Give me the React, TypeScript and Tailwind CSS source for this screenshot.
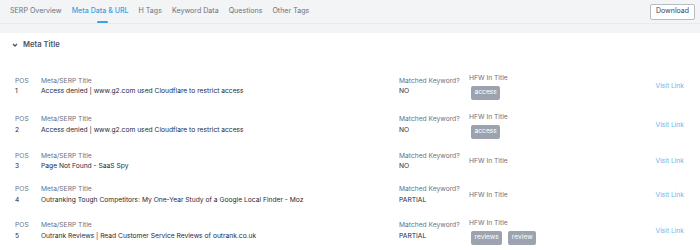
import React from 'react';

const tabs = ['SERP Overview', 'Meta Data & URL', 'H Tags', 'Keyword Data', 'Questions', 'Other Tags'];

const rows = [
  { pos: 1, title: 'Access denied | www.g2.com used Cloudflare to restrict access', matched: 'NO', hfw: ['access'] },
  { pos: 2, title: 'Access denied | www.g2.com used Cloudflare to restrict access', matched: 'NO', hfw: ['access'] },
  { pos: 3, title: 'Page Not Found - SaaS Spy', matched: 'NO', hfw: [] },
  { pos: 4, title: 'Outranking Tough Competitors: My One-Year Study of a Google Local Finder - Moz', matched: 'PARTIAL', hfw: [] },
  { pos: 5, title: 'Outrank Reviews | Read Customer Service Reviews of outrank.co.uk', matched: 'PARTIAL', hfw: ['reviews', 'review'] },
];

export default function App() {
  return (
    <div className="w-[700px] h-[250px] overflow-hidden bg-white font-['Inter',sans-serif]">
      <div className="flex items-center h-[24px] bg-[#f3f4f6] border-b border-[#e8eaed] pl-[10px] pr-[5px]">
        <div className="flex gap-[10px] h-full">
          {tabs.map((t, i) => (
            <div key={t} className="relative flex items-center h-full">
              <span className={`text-[7.1px] ${i === 1 ? 'text-[#3da1e3] font-medium' : 'text-[#6b7280]'}`}>{t}</span>
              {i === 1 && <span className="absolute left-[25px] bottom-0 w-[11px] h-[2px] bg-[#3da1e3] rounded-full" />}
            </div>
          ))}
        </div>
        <button className="ml-auto h-[16px] w-[45px] bg-white border border-[#b8bcc2] rounded-[2px] text-[7px] text-[#374151]">
          Download
        </button>
      </div>
      <div className="h-[9px] bg-[#f3f4f6]" />
      <div className="pl-[12px] pr-[16px]">
        <div className="flex items-center gap-[5px] h-[24px]">
          <svg width="6" height="4" viewBox="0 0 6 4" className="text-[#4b5563]">
            <path d="M1 1 L3 3 L5 1" fill="none" stroke="currentColor" strokeWidth="1.3" />
          </svg>
          <span className="text-[7.6px] font-semibold text-[#4b5563]">Meta Title</span>
        </div>
        <div className="mt-[10px] pl-[3px]">
          {rows.map((r) => (
            <div key={r.pos} className="flex items-center py-[6px] text-[6.7px] leading-[10.8px]">
              <div className="w-[26px] flex flex-col">
                <span className="text-[#6b7280]">POS</span>
                <span className="text-[#1f2937]">{r.pos}</span>
              </div>
              <div className="w-[358px] flex flex-col">
                <span className="text-[#6b7280]">Meta/SERP Title</span>
                <span className="text-[#1f2937]">{r.title}</span>
              </div>
              <div className="w-[70px] flex flex-col">
                <span className="text-[#6b7280]">Matched Keyword?</span>
                <span className="text-[#1f2937]">{r.matched}</span>
              </div>
              <div className="flex-1 flex flex-col">
                <span className="text-[#6b7280]">HFW In Title</span>
                {r.hfw.length > 0 && (
                  <div className="flex gap-[6px] mt-[2px] pl-[2px]">
                    {r.hfw.map((w) => (
                      <span key={w} className="h-[14px] px-[3.5px] flex items-center bg-[#9ca3af] text-white rounded-[2px]">{w}</span>
                    ))}
                  </div>
                )}
              </div>
              <a className="text-[#6cb6ec]">Visit Link</a>
            </div>
          ))}
        </div>
      </div>
    </div>
  );
}
